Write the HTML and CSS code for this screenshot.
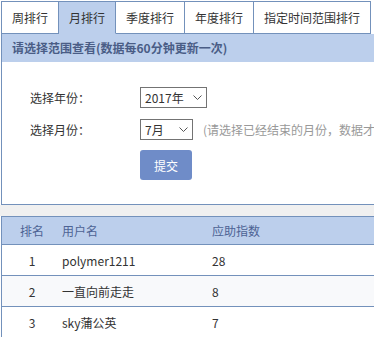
FILE: index.html
```html
<!DOCTYPE html>
<html lang="zh-CN">
<head>
  <meta charset="UTF-8">
  <meta name="viewport" content="width=device-width, initial-scale=1.0">
  <title>应助排行</title>
  <link rel="stylesheet" href="styles.css">
</head>
<body>

  <div class="tabs">
    <div class="tab">周排行</div>
    <div class="tab active">月排行</div>
    <div class="tab">季度排行</div>
    <div class="tab">年度排行</div>
    <div class="tab">指定时间范围排行</div>
  </div>

  <div class="panel">
    <div class="panel-title">请选择范围查看(数据每60分钟更新一次)</div>
    <form class="range-form">
      <div class="form-row">
        <label class="form-label">选择年份：</label>
        <span class="select-wrap year">
          <select>
            <option>2017年</option>
          </select>
          <svg class="chevron" width="9" height="5" viewBox="0 0 9 5"><path d="M0.5 0.5 L4.5 4.5 L8.5 0.5" fill="none" stroke="#555" stroke-width="1"/></svg>
        </span>
      </div>
      <div class="form-row">
        <label class="form-label">选择月份：</label>
        <span class="select-wrap month">
          <select>
            <option>7月</option>
          </select>
          <svg class="chevron" width="9" height="5" viewBox="0 0 9 5"><path d="M0.5 0.5 L4.5 4.5 L8.5 0.5" fill="none" stroke="#555" stroke-width="1"/></svg>
        </span>
        <span class="hint">(请选择已经结束的月份，数据才会完整)</span>
      </div>
      <div class="form-row">
        <span class="form-label"></span>
        <button type="button" class="submit-btn">提交</button>
      </div>
    </form>
  </div>

  <div class="spacer"></div>

  <table class="rank-table">
    <thead>
      <tr>
        <th class="col-rank">排名</th>
        <th class="col-user">用户名</th>
        <th>应助指数</th>
      </tr>
    </thead>
    <tbody>
      <tr>
        <td class="col-rank">1</td>
        <td class="col-user">polymer1211</td>
        <td>28</td>
      </tr>
      <tr class="alt">
        <td class="col-rank">2</td>
        <td class="col-user">一直向前走走</td>
        <td>8</td>
      </tr>
      <tr>
        <td class="col-rank">3</td>
        <td class="col-user">sky蒲公英</td>
        <td>7</td>
      </tr>
    </tbody>
  </table>

</body>
</html>
```

FILE: styles.css
```css
body {
  font-family: "Noto Sans CJK SC", "Liberation Sans", sans-serif;
  font-size: 12px;
  color: #333;
  background-color: #fff;
  margin: 0;
  padding-top: 1px;
  overflow: hidden;
}

/* Tabs */
.tabs {
  display: flex;
  margin-left: 1px;
}

.tab {
  height: 31px;
  line-height: 31px;
  padding: 0 10px;
  border: 1px solid #7391bb;
  border-left: none;
  background-color: #fff;
  white-space: nowrap;
}

.tab:first-child {
  border-left: 1px solid #7391bb;
}

.tab.active {
  background-color: #bccfec;
  border-bottom-color: #bccfec;
}

/* Range panel */
.panel {
  margin-left: 1px;
  border-left: 1px solid #7391bb;
  border-bottom: 1px solid #7391bb;
  white-space: nowrap;
  overflow: hidden;
}

.panel-title {
  height: 28px;
  line-height: 28px;
  padding-left: 10px;
  background-color: #bccfec;
  color: #4a5d86;
  font-weight: bold;
}

.range-form {
  padding: 25px 0 24px 28px;
}

.form-row {
  display: flex;
  align-items: center;
  margin-bottom: 11px;
}

.form-row:last-child {
  margin-bottom: 0;
  margin-top: -1px;
}

.form-label {
  width: 110px;
  flex-shrink: 0;
}

.select-wrap {
  position: relative;
  display: inline-block;
}

.select-wrap select {
  appearance: none;
  -webkit-appearance: none;
  font-family: inherit;
  font-size: 12px;
  color: #333;
  height: 21px;
  padding: 0 0 0 4px;
  border: 1px solid #737373;
  border-radius: 0;
  background-color: #fff;
  outline: none;
}

.select-wrap.year select {
  width: 67px;
}

.select-wrap.month select {
  width: 53px;
}

.chevron {
  position: absolute;
  right: 5px;
  top: 8px;
  pointer-events: none;
}

.hint {
  margin-left: 10px;
  color: #999;
}

.submit-btn {
  font-family: inherit;
  font-size: 12px;
  color: #fff;
  background-color: #6f8cc8;
  border: none;
  border-radius: 3px;
  width: 52px;
  height: 30px;
  padding: 0;
  cursor: pointer;
}

.submit-btn:hover {
  background-color: #5d7bbb;
}

.spacer {
  height: 11px;
  background-color: #f0f0f0;
}

/* Ranking table */
.rank-table {
  margin-left: 1px;
  width: calc(100% - 1px);
  border-collapse: collapse;
  border-left: 1px solid #7391bb;
}

.rank-table th,
.rank-table td {
  text-align: left;
  padding: 0;
  border-top: 1px solid #7391bb;
  border-bottom: 1px solid #7391bb;
  white-space: nowrap;
}

.rank-table th {
  height: 27px;
  font-weight: normal;
  color: #4d6394;
  background-color: #bccfec;
}

.rank-table td {
  height: 30px;
}

.rank-table .col-rank {
  width: 60px;
  text-align: center;
}

.rank-table .col-user {
  width: 150px;
}

.rank-table tr.alt td {
  background-color: #f8f9fb;
}
```
